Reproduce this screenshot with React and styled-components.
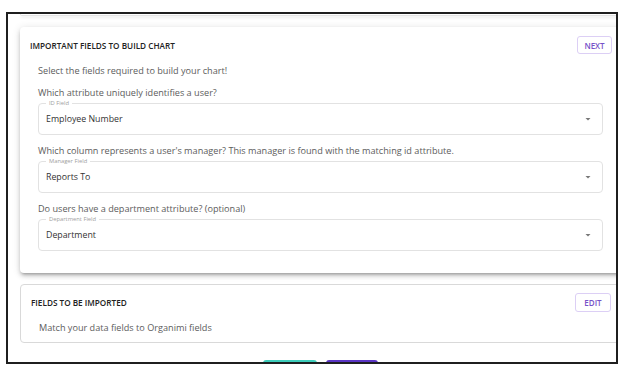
import React from 'react';
import styled, { createGlobalStyle } from 'styled-components';

const Global = createGlobalStyle`
  html, body { margin: 0; padding: 0; background: #fff; }
  body { font-family: "Open Sans", "Liberation Sans", sans-serif; color: #555; }
  * { box-sizing: border-box; }
`;

const Frame = styled.div`
  margin: 12px 0 0 6px;
  width: 612px;
  height: 352px;
  border: 2px solid #1f1f1f;
  overflow: hidden;
  padding-left: 12px;
`;

const Column = styled.div`
  width: 606px;
  display: flex;
  flex-direction: column;
`;

const PrevCardTail = styled.div`
  height: 2px;
  background: #fff;
  border: 1px solid #e3e3e3;
  border-top: none;
  border-radius: 0 0 4px 4px;
  box-shadow: 0 2px 3px rgba(0, 0, 0, 0.08);
`;

const Card = styled.section`
  margin-top: ${(p) => p.$gap}px;
  background: #fff;
  border-radius: 4px;
  padding: ${(p) => p.$padding};
  ${(p) =>
    p.$raised
      ? `box-shadow: 0 3px 3px -2px rgba(0,0,0,0.25), 0 3px 4px 0 rgba(0,0,0,0.16), 0 1px 8px 0 rgba(0,0,0,0.12);`
      : `border: 1px solid #d9d9d9;`}
`;

const CardHeader = styled.div`
  display: flex;
  align-items: center;
  justify-content: space-between;
  padding: 0 14px 0 10px;
`;

const CardTitle = styled.h2`
  margin: 0;
  font-size: 8.2px;
  font-weight: 600;
  color: #222;
  letter-spacing: 0;
`;

const OutlineButton = styled.button`
  height: ${(p) => p.$h}px;
  width: ${(p) => p.$w}px;
  padding: 0;
  background: #fff;
  border: 1px solid #dccff5;
  border-radius: 3px;
  color: #7652c8;
  font-family: inherit;
  font-size: 8px;
  font-weight: 600;
  display: flex;
  align-items: center;
  justify-content: center;
`;

const CardBody = styled.div`
  padding: 0 23px 0 18px;
  margin-top: ${(p) => p.$top}px;
  display: flex;
  flex-direction: column;
`;

const Text = styled.p`
  margin: 0;
  margin-top: ${(p) => p.$top || 0}px;
  font-size: 9.15px;
  line-height: 12px;
  color: #5c5c5c;
  white-space: nowrap;
`;

const SelectBox = styled.div`
  position: relative;
  margin-top: 4px;
  height: 32px;
  border: 1px solid #e2e2e2;
  border-radius: 4px;
  display: flex;
  align-items: center;
  justify-content: space-between;
  padding: 0 8px 0 7px;
`;

const FloatLabel = styled.span`
  position: absolute;
  top: -5px;
  left: 7px;
  padding: 0 3px;
  background: #fff;
  font-size: 5.8px;
  line-height: 8px;
  color: #a0a0a0;
`;

const Value = styled.span`
  font-size: 8.8px;
  font-weight: 500;
  color: #333;
`;

const ArrowIcon = () => (
  <svg width="12" height="12" viewBox="0 0 24 24" aria-hidden="true">
    <path d="M7 10l5 5 5-5z" fill="#777" />
  </svg>
);

const ButtonRow = styled.div`
  margin-top: 17px;
  display: flex;
  justify-content: center;
  gap: 9px;
  padding-right: 5px;
`;

const ActionButton = styled.button`
  width: ${(p) => p.$w}px;
  height: 30px;
  border: none;
  border-radius: 3px;
  background: ${(p) => p.$bg};
`;

const fields = [
  {
    q: 'Which attribute uniquely identifies a user?',
    label: 'ID Field',
    value: 'Employee Number',
  },
  {
    q: "Which column represents a user's manager? This manager is found with the matching id attribute.",
    label: 'Manager Field',
    value: 'Reports To',
  },
  {
    q: 'Do users have a department attribute? (optional)',
    label: 'Department Field',
    value: 'Department',
  },
];

export default function App() {
  return (
    <>
      <Global />
      <Frame>
        <Column>
          <PrevCardTail />
          <Card $raised $gap={11} $padding="9px 0 22px 0">
            <CardHeader>
              <CardTitle>IMPORTANT FIELDS TO BUILD CHART</CardTitle>
              <OutlineButton $w={35} $h={18}>NEXT</OutlineButton>
            </CardHeader>
            <CardBody $top={11}>
              <Text>Select the fields required to build your chart!</Text>
              {fields.map((f) => (
                <React.Fragment key={f.label}>
                  <Text $top={10}>{f.q}</Text>
                  <SelectBox>
                    <FloatLabel>{f.label}</FloatLabel>
                    <Value>{f.value}</Value>
                    <ArrowIcon />
                  </SelectBox>
                </React.Fragment>
              ))}
            </CardBody>
          </Card>
          <Card $gap={11} $padding="8px 0 8px 0">
            <CardHeader>
              <CardTitle>FIELDS TO BE IMPORTED</CardTitle>
              <OutlineButton $w={36} $h={19}>EDIT</OutlineButton>
            </CardHeader>
            <CardBody $top={10}>
              <Text>Match your data fields to Organimi fields</Text>
            </CardBody>
          </Card>
          <ButtonRow>
            <ActionButton $w={54} $bg="#3ecdbb" />
            <ActionButton $w={52} $bg="#5a35c4" />
          </ButtonRow>
        </Column>
      </Frame>
    </>
  );
}
